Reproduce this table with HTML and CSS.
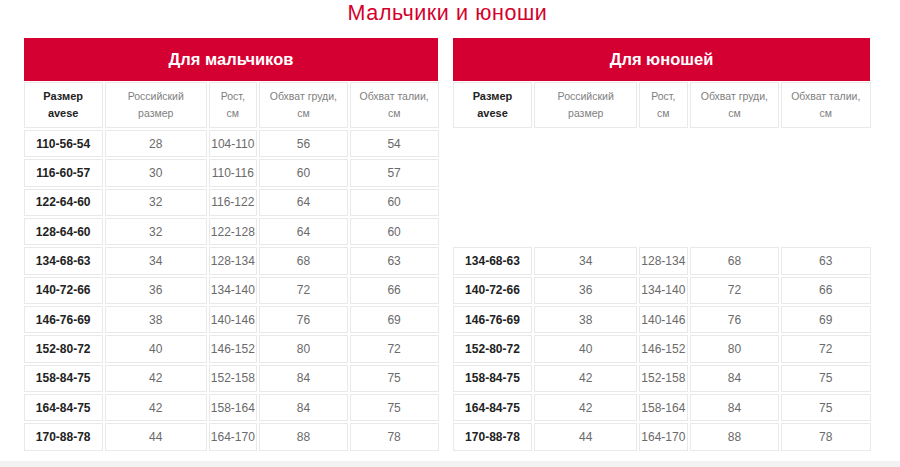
FILE: index.html
```html
<!DOCTYPE html>
<html lang="ru">
<head>
<meta charset="utf-8">
<title>Мальчики и юноши</title>
<link rel="stylesheet" href="styles.css">
</head>
<body>
<div class="page">
  <h1 class="title">Мальчики и юноши</h1>
  <div class="tables">
    <section class="sizes">
      <div class="sizes-head">Для мальчиков</div>
      <table class="grid">
        <colgroup><col class="c1"><col class="c2"><col class="c3"><col class="c4"><col class="c5"></colgroup>
        <thead>
          <tr><th class="key">Размер<br>avese</th><th>Российский<br>размер</th><th>Рост,<br>см</th><th>Обхват груди,<br>см</th><th>Обхват талии,<br>см</th></tr>
        </thead>
        <tbody>
          <tr><td class="key">110-56-54</td><td>28</td><td>104-110</td><td>56</td><td>54</td></tr>
          <tr><td class="key">116-60-57</td><td>30</td><td>110-116</td><td>60</td><td>57</td></tr>
          <tr><td class="key">122-64-60</td><td>32</td><td>116-122</td><td>64</td><td>60</td></tr>
          <tr><td class="key">128-64-60</td><td>32</td><td>122-128</td><td>64</td><td>60</td></tr>
          <tr><td class="key">134-68-63</td><td>34</td><td>128-134</td><td>68</td><td>63</td></tr>
          <tr><td class="key">140-72-66</td><td>36</td><td>134-140</td><td>72</td><td>66</td></tr>
          <tr><td class="key">146-76-69</td><td>38</td><td>140-146</td><td>76</td><td>69</td></tr>
          <tr><td class="key">152-80-72</td><td>40</td><td>146-152</td><td>80</td><td>72</td></tr>
          <tr><td class="key">158-84-75</td><td>42</td><td>152-158</td><td>84</td><td>75</td></tr>
          <tr><td class="key">164-84-75</td><td>42</td><td>158-164</td><td>84</td><td>75</td></tr>
          <tr><td class="key">170-88-78</td><td>44</td><td>164-170</td><td>88</td><td>78</td></tr>
        </tbody>
      </table>
    </section>
    <section class="sizes">
      <div class="sizes-head">Для юношей</div>
      <table class="grid">
        <colgroup><col class="c1"><col class="c2"><col class="c3"><col class="c4"><col class="c5"></colgroup>
        <thead>
          <tr><th class="key">Размер<br>avese</th><th>Российский<br>размер</th><th>Рост,<br>см</th><th>Обхват груди,<br>см</th><th>Обхват талии,<br>см</th></tr>
        </thead>
        <tbody>
          <tr class="blank"><td></td><td></td><td></td><td></td><td></td></tr>
          <tr class="blank"><td></td><td></td><td></td><td></td><td></td></tr>
          <tr class="blank"><td></td><td></td><td></td><td></td><td></td></tr>
          <tr class="blank"><td></td><td></td><td></td><td></td><td></td></tr>
          <tr><td class="key">134-68-63</td><td>34</td><td>128-134</td><td>68</td><td>63</td></tr>
          <tr><td class="key">140-72-66</td><td>36</td><td>134-140</td><td>72</td><td>66</td></tr>
          <tr><td class="key">146-76-69</td><td>38</td><td>140-146</td><td>76</td><td>69</td></tr>
          <tr><td class="key">152-80-72</td><td>40</td><td>146-152</td><td>80</td><td>72</td></tr>
          <tr><td class="key">158-84-75</td><td>42</td><td>152-158</td><td>84</td><td>75</td></tr>
          <tr><td class="key">164-84-75</td><td>42</td><td>158-164</td><td>84</td><td>75</td></tr>
          <tr><td class="key">170-88-78</td><td>44</td><td>164-170</td><td>88</td><td>78</td></tr>
        </tbody>
      </table>
    </section>
  </div>
</div>
<div class="footer-band"></div>
</body>
</html>
```

FILE: styles.css
```css
html, body {
  margin: 0;
  padding: 0;
  background: #ffffff;
}

body {
  font-family: "Liberation Sans", Arial, sans-serif;
  color: #555;
  height: 467px;
  overflow: hidden;
  display: flex;
  flex-direction: column;
}

.page {
  flex: 1;
}

.title {
  margin: 0;
  padding: 0 5px 12px 0;
  height: 26px;
  line-height: 26px;
  font-size: 21.5px;
  font-weight: normal;
  letter-spacing: 0.6px;
  text-align: center;
  color: #d5002c;
}

.tables {
  display: grid;
  grid-template-columns: 414px 417px;
  column-gap: 15px;
  margin-left: 24px;
}

.sizes {
  display: flex;
  flex-direction: column;
}

.sizes-head {
  height: 43px;
  line-height: 43px;
  background: #d50032;
  color: #fff;
  text-align: center;
  font-size: 16.5px;
  font-weight: bold;
}

.grid {
  border-collapse: separate;
  border-spacing: 2.5px 2px;
  table-layout: fixed;
  width: calc(100% + 5px);
  margin: -1px -2.5px 0 -2.5px;
}

.c1 { width: 19.5%; }
.c2 { width: 25%; }
.c3 { width: 11.9%; }
.c4 { width: 21.8%; }
.c5 { width: 21.8%; }

.grid th,
.grid td {
  border: 1px solid #e9e9e9;
  text-align: center;
  padding: 0;
}

.grid th {
  height: 44px;
  font-size: 10.5px;
  line-height: 17.5px;
  font-weight: normal;
  color: #808080;
}

.grid td {
  height: 25.33px;
  font-size: 12px;
  color: #6a6a6a;
}

.grid th.key {
  font-weight: bold;
  color: #222;
  font-size: 11px;
}

.grid td.key {
  font-weight: bold;
  color: #222;
  font-size: 12px;
}

.grid tr.blank td {
  border-color: transparent;
}

.footer-band {
  height: 6px;
  background: #f2f2f2;
}
```
